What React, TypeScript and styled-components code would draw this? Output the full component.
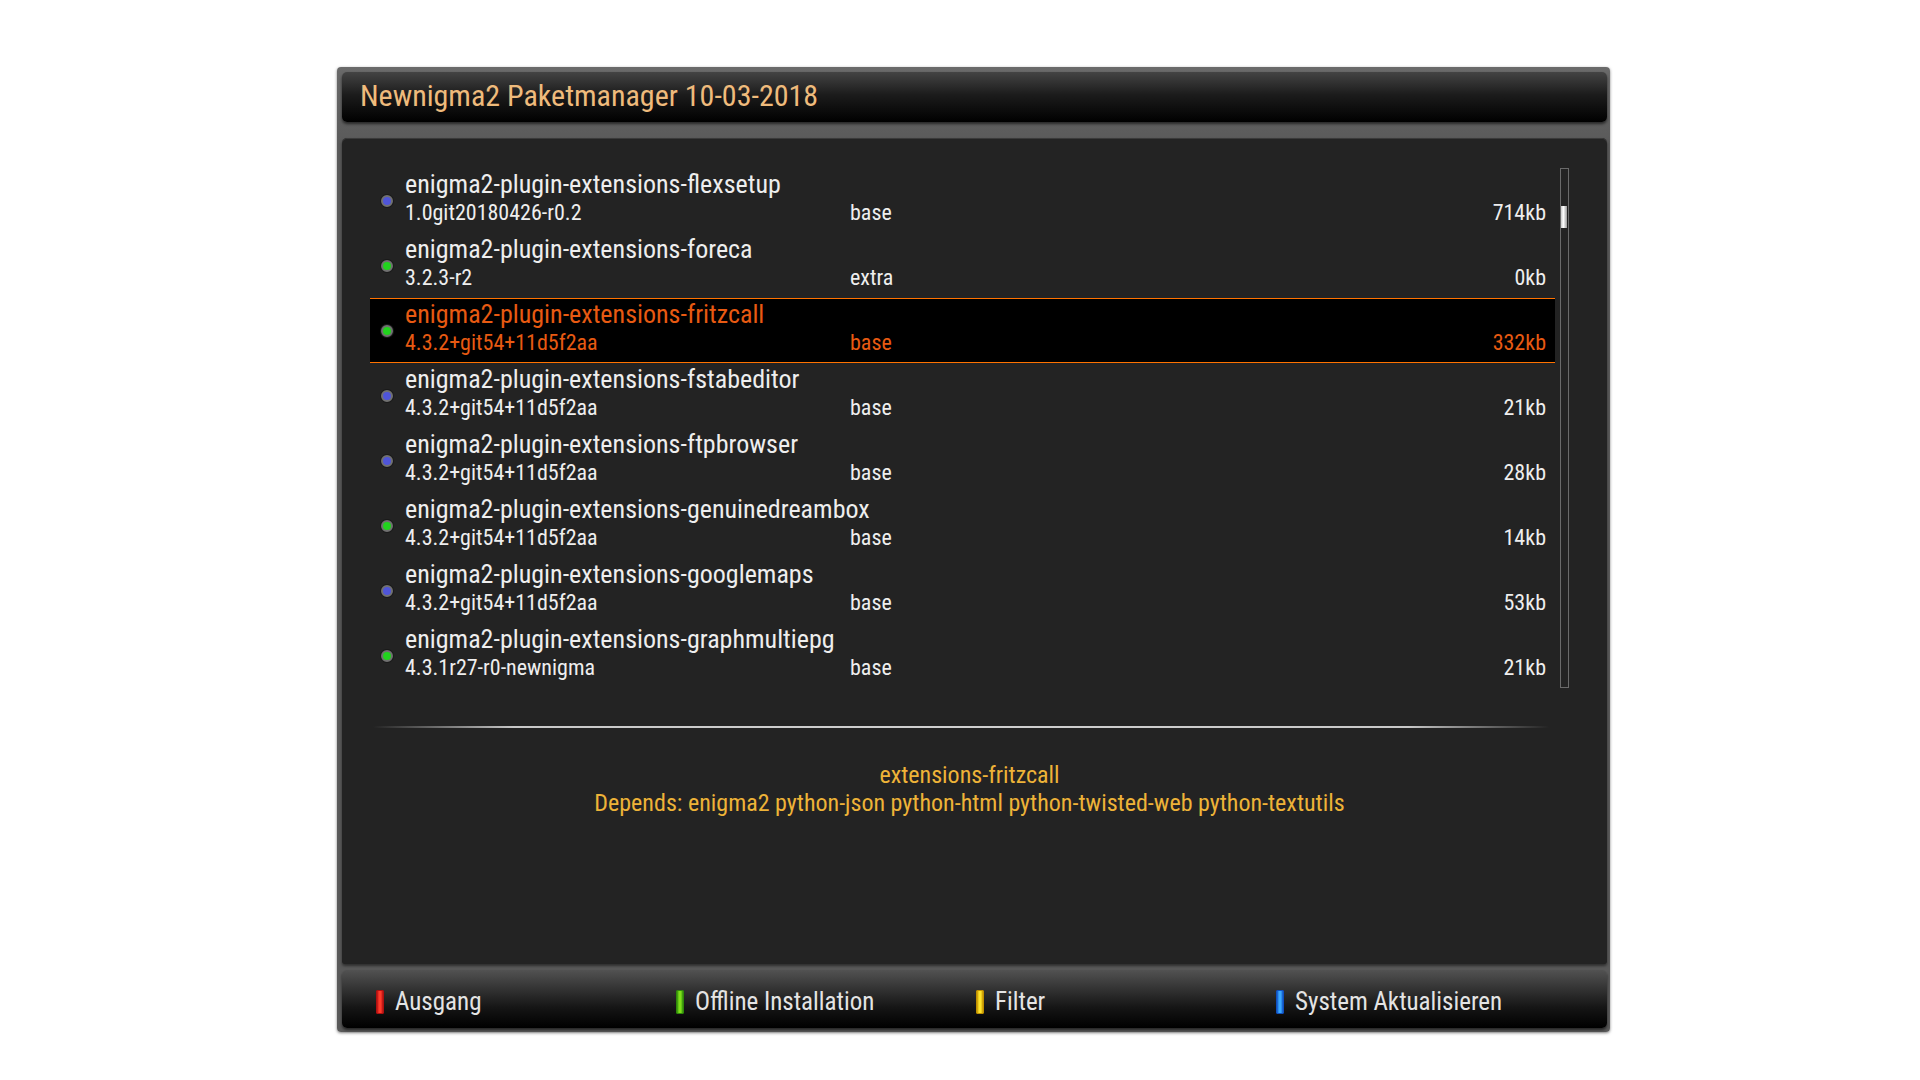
import React from "react";
import styled, { createGlobalStyle } from "styled-components";

const Global = createGlobalStyle`
  html, body { margin: 0; padding: 0; background: #ffffff; }
  body { font-family: "Roboto Condensed", "Roboto", "Liberation Sans", sans-serif; font-stretch: condensed; }
`;

const Page = styled.div`
  width: 1920px;
  height: 1080px;
  padding: 67px 0 0 337px;
  box-sizing: border-box;
`;

const Frame = styled.div`
  width: 1273px;
  height: 965px;
  box-sizing: border-box;
  padding: 5px 3px 4px 5px;
  background: linear-gradient(#6a6a6a, #5a5a5a 8%, #5a5a5a);
  border-radius: 4px;
  box-shadow: 0 1px 3px rgba(0, 0, 0, 0.5);
  display: flex;
  flex-direction: column;
`;

const TitleBar = styled.div`
  height: 50px;
  flex: none;
  box-sizing: border-box;
  border-radius: 5px;
  background: linear-gradient(#444 0%, #1c1c1c 45%, #000 100%);
  box-shadow: 0 2px 3px rgba(0, 0, 0, 0.6);
  display: flex;
  align-items: center;
  padding: 0 0 4px 18px;
  color: #efbb7c;
  font-size: 30px;
`;

const Body = styled.div`
  margin-top: 16px;
  height: 826px;
  flex: none;
  background: #232323;
  border-radius: 5px 5px 3px 3px;
  box-shadow: 0 2px 3px rgba(0, 0, 0, 0.5), inset 0 1px 0 #3a3a3a;
  box-sizing: border-box;
  padding: 30px 38px 0 28px;
  display: flex;
  flex-direction: column;
`;

const ListArea = styled.div`
  display: flex;
  gap: 5px;
  height: 520px;
`;

const List = styled.div`
  width: 1185px;
  display: flex;
  flex-direction: column;
`;

const Row = styled.div<{ $sel?: boolean }>`
  height: 65px;
  box-sizing: border-box;
  display: grid;
  grid-template-columns: 12px 1fr 120px;
  column-gap: 12px;
  padding: 0 9px 0 11px;
  background: ${(p) => (p.$sel ? "#000" : "transparent")};
  border-top: 1px solid ${(p) => (p.$sel ? "#ff7200" : "transparent")};
  border-bottom: 1px solid ${(p) => (p.$sel ? "#ff7200" : "transparent")};
  color: ${(p) => (p.$sel ? "#e85a12" : "#eeeeee")};
`;

const Dot = styled.span<{ $c: string }>`
  align-self: center;
  width: 12px;
  height: 12px;
  border-radius: 50%;
  box-sizing: border-box;
  border: 2px solid #707070;
  background: ${(p) => p.$c};
  box-shadow: 0 0 0 1px #1a1a1a;
`;

const Texts = styled.div`
  display: grid;
  grid-template-columns: 445px 1fr;
  grid-template-rows: 30px 28px;
  align-content: start;
`;

const Name = styled.div`
  grid-column: 1 / 3;
  font-size: 26px;
  line-height: 30px;
  white-space: nowrap;
`;

const Version = styled.div`
  font-size: 22px;
  line-height: 28px;
  white-space: nowrap;
`;

const Size = styled.div`
  align-self: end;
  text-align: right;
  font-size: 22px;
  line-height: 28px;
  padding-bottom: 5px;
`;

const Scrollbar = styled.div`
  width: 9px;
  height: 520px;
  box-sizing: border-box;
  border: 1px solid #6a6a6a;
  padding-top: 37px;
`;

const Thumb = styled.div`
  width: 6px;
  height: 22px;
  background: linear-gradient(90deg, #c8c8c8, #ffffff 40%, #9a9a9a);
`;

const Separator = styled.div`
  margin: 38px 20px 0 3px;
  height: 2px;
  background: linear-gradient(90deg, rgba(200,200,200,0) 0%, #c8c8c8 12%, #cfcfcf 50%, #c8c8c8 88%, rgba(200,200,200,0) 100%);
`;

const Description = styled.div`
  margin-top: 33px;
  text-align: center;
  color: #eeb338;
  font-size: 24px;
  line-height: 28px;
`;

const Footer = styled.div`
  margin-top: 6px;
  height: 58px;
  flex: none;
  box-sizing: border-box;
  border-radius: 5px;
  background: linear-gradient(#525252 0%, #3a3a3a 25%, #151515 65%, #000 100%);
  box-shadow: 0 2px 3px rgba(0, 0, 0, 0.6);
  display: flex;
  align-items: center;
  padding: 5px 0 0 34px;
`;

const KeyButton = styled.div`
  width: 300px;
  display: flex;
  align-items: center;
  gap: 11px;
  color: #e4e4e4;
  font-size: 25px;
`;

const ColorKey = styled.span<{ $c: string; $b: string }>`
  width: 8px;
  height: 24px;
  box-sizing: border-box;
  border: 1px solid ${(p) => p.$b};
  border-radius: 1px;
  background: linear-gradient(90deg, ${(p) => p.$b}, ${(p) => p.$c} 35%, ${(p) => p.$c} 65%, ${(p) => p.$b});
`;

const BLUE = "#4f55d8";
const GREEN = "#22d21e";

const rows = [
  { name: "enigma2-plugin-extensions-flexsetup", ver: "1.0git20180426-r0.2", sec: "base", size: "714kb", dot: BLUE },
  { name: "enigma2-plugin-extensions-foreca", ver: "3.2.3-r2", sec: "extra", size: "0kb", dot: GREEN },
  { name: "enigma2-plugin-extensions-fritzcall", ver: "4.3.2+git54+11d5f2aa", sec: "base", size: "332kb", dot: GREEN, sel: true },
  { name: "enigma2-plugin-extensions-fstabeditor", ver: "4.3.2+git54+11d5f2aa", sec: "base", size: "21kb", dot: BLUE },
  { name: "enigma2-plugin-extensions-ftpbrowser", ver: "4.3.2+git54+11d5f2aa", sec: "base", size: "28kb", dot: BLUE },
  { name: "enigma2-plugin-extensions-genuinedreambox", ver: "4.3.2+git54+11d5f2aa", sec: "base", size: "14kb", dot: GREEN },
  { name: "enigma2-plugin-extensions-googlemaps", ver: "4.3.2+git54+11d5f2aa", sec: "base", size: "53kb", dot: BLUE },
  { name: "enigma2-plugin-extensions-graphmultiepg", ver: "4.3.1r27-r0-newnigma", sec: "base", size: "21kb", dot: GREEN },
];

const keys = [
  { label: "Ausgang", c: "#ff3a2a", b: "#b01010" },
  { label: "Offline Installation", c: "#7ee01a", b: "#2f8a0a" },
  { label: "Filter", c: "#ffe42a", b: "#c09000" },
  { label: "System Aktualisieren", c: "#3aa8ff", b: "#1050c0" },
];

export default function App() {
  return (
    <>
      <Global />
      <Page>
        <Frame>
          <TitleBar>Newnigma2 Paketmanager 10-03-2018</TitleBar>
          <Body>
            <ListArea>
              <List>
                {rows.map((r) => (
                  <Row key={r.name} $sel={r.sel}>
                    <Dot $c={r.dot} />
                    <Texts>
                      <Name>{r.name}</Name>
                      <Version>{r.ver}</Version>
                      <Version>{r.sec}</Version>
                    </Texts>
                    <Size>{r.size}</Size>
                  </Row>
                ))}
              </List>
              <Scrollbar>
                <Thumb />
              </Scrollbar>
            </ListArea>
            <Separator />
            <Description>
              extensions-fritzcall
              <br />
              Depends: enigma2 python-json python-html python-twisted-web python-textutils
            </Description>
          </Body>
          <Footer>
            {keys.map((k) => (
              <KeyButton key={k.label}>
                <ColorKey $c={k.c} $b={k.b} />
                {k.label}
              </KeyButton>
            ))}
          </Footer>
        </Frame>
      </Page>
    </>
  );
}
